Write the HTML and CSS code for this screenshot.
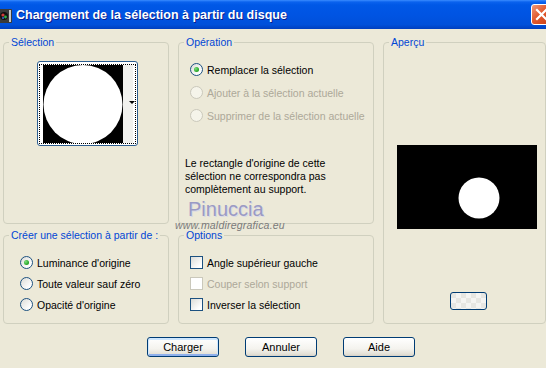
FILE: index.html
```html
<!DOCTYPE html>
<html lang="fr">
<head>
    <meta charset="UTF-8">
    <meta name="viewport" content="width=device-width, initial-scale=1.0">
    <title>Chargement de la sélection à partir du disque</title>
    <link rel="stylesheet" href="styles.css">
</head>
<body>
    <div class="window">
        <div class="titlebar">
            <svg class="app-icon" width="13" height="14" viewBox="0 0 13 14">
                <rect x="0" y="0" width="13" height="14" rx="1" fill="#3a3a3a"/>
                <rect x="10" y="1" width="2" height="12" fill="#c8c8c8"/>
                <circle cx="5" cy="7" r="4" fill="#111"/>
                <circle cx="4" cy="6" r="1.6" fill="#d23a3a"/>
                <circle cx="6.5" cy="8" r="1.4" fill="#2fb04a"/>
                <circle cx="4" cy="9" r="1" fill="#3a6ad2"/>
            </svg>
            <span class="title">Chargement de la sélection à partir du disque</span>
            <span class="close-btn">
                <svg width="21" height="21" viewBox="0 0 21 21">
                    <path d="M6 6 L15 15 M15 6 L6 15" stroke="#fff" stroke-width="2.2" stroke-linecap="square"/>
                </svg>
            </span>
        </div>

        <div class="client">
            <div class="groups">
                <fieldset class="group g-selection">
                    <legend>Sélection</legend>
                    <div class="thumb">
                        <div class="thumb-focus">
                            <svg width="80" height="78" viewBox="0 0 80 78">
                                <rect width="80" height="78" fill="#000"/>
                                <circle cx="40" cy="39.5" r="39.5" fill="#fff"/>
                            </svg>
                            <div class="thumb-strip"><span class="arrow"></span></div>
                        </div>
                    </div>
                </fieldset>

                <fieldset class="group g-operation">
                    <legend>Opération</legend>
                    <div class="choices op-choices">
                        <div class="opt"><span class="radio checked"></span>Remplacer la sélection</div>
                        <div class="opt disabled"><span class="radio"></span>Ajouter à la sélection actuelle</div>
                        <div class="opt disabled"><span class="radio"></span>Supprimer de la sélection actuelle</div>
                    </div>
                    <p class="note">Le rectangle d'origine de cette<br>sélection ne correspondra pas<br>complètement au support.</p>
                </fieldset>

                <fieldset class="group g-preview">
                    <legend>Aperçu</legend>
                    <svg class="preview" width="140" height="84" viewBox="0 0 140 84">
                        <rect width="140" height="84" fill="#000"/>
                        <circle cx="82" cy="53" r="20.5" fill="#fff"/>
                    </svg>
                    <div class="mini-btn"></div>
                </fieldset>

                <fieldset class="group g-source">
                    <legend>Créer une sélection à partir de :</legend>
                    <div class="choices src-choices">
                        <div class="opt"><span class="radio checked"></span>Luminance d'origine</div>
                        <div class="opt"><span class="radio"></span>Toute valeur sauf zéro</div>
                        <div class="opt"><span class="radio"></span>Opacité d'origine</div>
                    </div>
                </fieldset>

                <fieldset class="group g-options">
                    <legend>Options</legend>
                    <div class="choices chk-choices">
                        <div class="opt"><span class="check"></span>Angle supérieur gauche</div>
                        <div class="opt disabled"><span class="check"></span>Couper selon support</div>
                        <div class="opt"><span class="check"></span>Inverser la sélection</div>
                    </div>
                </fieldset>
            </div>

            <div class="actions">
                <button class="btn default">Charger</button>
                <button class="btn">Annuler</button>
                <button class="btn">Aide</button>
            </div>
        </div>

        <div class="watermark">
            <span class="wm-name">Pinuccia</span>
            <span class="wm-site">www.maldiregrafica.eu</span>
        </div>
    </div>
</body>
</html>
```

FILE: styles.css
```css
body { margin: 0; font-family: "Liberation Sans", Arial, sans-serif; font-size: 10.5px; color: #000; background: #ECE9D8; }
.window { position: relative; width: 546px; height: 368px; overflow: hidden; background: #ECE9D8; }

/* title bar */
.titlebar {
    height: 29px;
    display: flex;
    align-items: center;
    overflow: hidden;
    background: linear-gradient(#3A8CFF 0, #0A62EE 2px, #0058E6 5px, #0054E3 50%, #0050DA 85%, #003FBE 100%);
}
.app-icon { margin-left: -1px; margin-top: 2px; flex: none; }
.title {
    margin-left: 4px;
    flex: 1;
    color: #fff;
    font-weight: bold;
    font-size: 12.5px;
    text-shadow: 1px 1px 0 #0A1E8C;
    white-space: nowrap;
}
.close-btn {
    flex: none;
    width: 21px;
    height: 21px;
    margin-right: -6px;
    box-sizing: border-box;
    border: 1px solid #fff;
    border-radius: 3px;
    background: linear-gradient(135deg, #F0997A, #E25A2E 45%, #C73E16);
    display: flex;
    align-items: center;
    justify-content: center;
}
.close-btn svg { margin: -1px; }

/* dialog body */
.client { padding-top: 7px; }
.groups {
    display: grid;
    grid-template-columns: 166px 196px 163px;
    grid-template-rows: 188px 95px;
    column-gap: 9px;
    row-gap: 5px;
    margin-left: 3px;
}
.group {
    margin: 0;
    padding: 0;
    min-width: 0;
    border: 1px solid #D0D0BF;
    border-radius: 4px;
}
.group legend {
    margin-left: 5px;
    padding: 0 2px;
    line-height: 13px;
    color: #0046D5;
}
.g-selection { grid-column: 1; grid-row: 1; }
.g-operation { grid-column: 2; grid-row: 1; }
.g-preview { grid-column: 3; grid-row: 1 / 3; }
.g-source { grid-column: 1; grid-row: 2; }
.g-options { grid-column: 2; grid-row: 2; }

/* selection thumbnail */
.thumb {
    width: 101px;
    height: 85px;
    margin: 12px 0 0 33px;
    box-sizing: border-box;
    border: 1px solid #2C5D8F;
    border-radius: 3px;
    background: #fff;
    padding: 2px 1px 1px 1px;
}
.thumb-focus {
    height: 100%;
    box-sizing: border-box;
    border: 1px dotted #000;
    display: flex;
    padding: 0 2px 0 3px;
}
.thumb-focus svg { display: block; }
.thumb-strip {
    width: 10px;
    background: #F1F1EE;
    display: flex;
    align-items: center;
    justify-content: flex-end;
}
.arrow {
    width: 0;
    height: 0;
    margin-top: -4px;
    margin-right: -2px;
    border-left: 3px solid transparent;
    border-right: 3px solid transparent;
    border-top: 3px solid #000;
}

/* radio / checkbox rows */
.choices { display: flex; flex-direction: column; }
.opt { display: flex; align-items: center; gap: 4px; white-space: nowrap; }
.opt.disabled { color: #ACA899; }
.op-choices { padding: 9px 0 0 11px; }
.op-choices .opt { height: 23px; }
.src-choices { padding: 10px 0 0 16px; }
.src-choices .opt { height: 21px; }
.chk-choices { padding: 10px 0 0 11px; }
.chk-choices .opt { height: 21px; }

.radio {
    position: relative;
    flex: none;
    width: 13px;
    height: 13px;
    box-sizing: border-box;
    border: 1px solid #1C5180;
    border-radius: 50%;
    background: linear-gradient(135deg, #DCDCD7, #fff 80%);
}
.radio.checked::after {
    content: "";
    position: absolute;
    left: 3px;
    top: 3px;
    width: 5px;
    height: 5px;
    border-radius: 50%;
    background: radial-gradient(circle at 35% 35%, #7BE07B, #21A121 70%);
}
.opt.disabled .radio { border-color: #CAC8BB; background: #F5F4EA; }

.check {
    flex: none;
    width: 13px;
    height: 13px;
    box-sizing: border-box;
    border: 1px solid #1C5180;
    background: linear-gradient(135deg, #DCDCD7, #fff 80%);
}
.opt.disabled .check { border-color: #CAC8BB; background: #fff; }

.note { margin: 30px 0 0 6px; line-height: 13px; }

/* preview */
.preview { display: block; margin: 96px 0 0 13px; }
.mini-btn {
    width: 37px;
    height: 18px;
    margin: 63px 0 0 66px;
    box-sizing: border-box;
    border: 1px solid #003C74;
    border-radius: 3px;
    background:
        repeating-conic-gradient(#F4F4F2 0 25%, #E6E6E2 0 50%) 0 0 / 10px 10px;
}

/* buttons */
.actions { display: flex; gap: 26px; margin: 13px 0 0 147px; }
.btn {
    width: 72px;
    height: 20px;
    padding: 0;
    box-sizing: border-box;
    border: 1px solid #003C74;
    border-radius: 3px;
    background: linear-gradient(#FFFFFF, #F4F3EE 60%, #E3E0D6 90%, #D6D0C5);
    font-family: "Liberation Sans", Arial, sans-serif;
    font-size: 11px;
    color: #000;
}
.btn.default { box-shadow: inset 0 1px 0 1px #CEE7FF, inset 0 -2px 0 0 #8FB0EC; }

/* watermark overlay */
.watermark {
    position: absolute;
    left: 175px;
    top: 198px;
    display: flex;
    flex-direction: column;
    pointer-events: none;
}
.wm-name {
    margin-left: 13px;
    font-size: 20px;
    line-height: 22px;
    color: #9A9AC4;
    text-shadow: 1px 1px 0 #D8D8E6;
}
.wm-site {
    font-size: 10.5px;
    font-style: italic;
    line-height: 11px;
    color: #7A7A7A;
    letter-spacing: 0.2px;
}
```
